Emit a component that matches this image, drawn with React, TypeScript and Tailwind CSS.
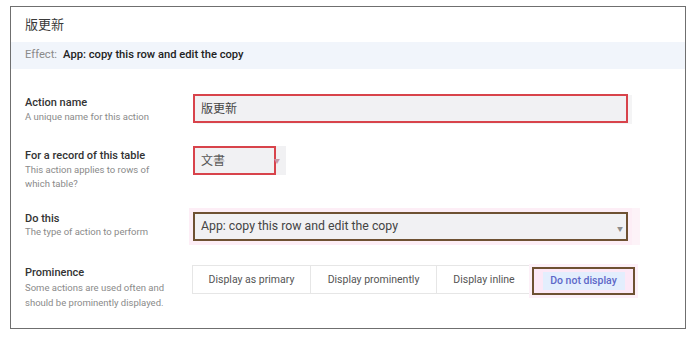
export default function App() {
  const font = { fontFamily: 'Roboto, "Noto Sans CJK TC", "Noto Sans CJK SC", sans-serif' }

  const prominence = ['Display as primary', 'Display prominently', 'Display inline']
  const widths = ['w-[119px]', 'w-[126px]', 'w-[95px]']

  return (
    <div className="w-[700px] h-[338px] bg-white pt-[6px] pl-[10px]" style={font}>
      <div className="w-[676px] h-[323px] border border-[#6f6f6f] flex flex-col">
        {/* header */}
        <div className="h-[35px] shrink-0 px-[14px] flex items-center text-[13px] text-[#3a3a3a]">
          版更新
        </div>

        {/* effect bar */}
        <div className="h-[27px] shrink-0 bg-[#f1f5fb] px-[14px] flex items-center gap-[6px] text-[11.2px]">
          <span className="text-[#8a8a8a]">Effect:</span>
          <span className="font-medium text-[#222]">App: copy this row and edit the copy</span>
        </div>

        <div className="pt-[25px] pl-[14px]">
          {/* action name */}
          <div className="flex h-[52px]">
            <div className="w-[168px] pt-[2px]">
              <div className="text-[11px] leading-[14px] font-medium text-[#333]">Action name</div>
              <div className="text-[9.5px] leading-[14px] text-[#8a8a8a]">A unique name for this action</div>
            </div>
            <div className="w-[435px] h-[29px] bg-[#f1f1f3] border-2 border-[#d8434b] flex items-center pl-[6px] text-[12px] text-[#444] shadow-[4px_1px_0_#f4f4f5]">
              版更新
            </div>
          </div>

          {/* table */}
          <div className="flex h-[66px]">
            <div className="w-[168px] pt-[3px]">
              <div className="text-[11px] leading-[14px] font-medium text-[#333]">For a record of this table</div>
              <div className="text-[9.5px] leading-[14px] text-[#8a8a8a] w-[150px]">
                This action applies to rows of which table?
              </div>
            </div>
            <div className="relative w-[93px] h-[29px] bg-[#f1f1f3] flex items-center">
              <div className="w-[83px] h-[29px] border-2 border-[#d8434b] flex items-center pl-[6px] text-[12px] text-[#555]">
                文書
              </div>
              <span className="absolute left-[81px] top-[10px] text-[6px] text-[#c99aa3]">▼</span>
            </div>
          </div>

          {/* do this */}
          <div className="flex h-[53px]">
            <div className="w-[168px]">
              <div className="text-[11px] leading-[14px] font-medium text-[#333]">Do this</div>
              <div className="text-[9.5px] leading-[12px] text-[#8a8a8a]">The type of action to perform</div>
            </div>
            <div className="relative w-[435px] h-[29px] bg-[#f1f1f3] border-2 border-[#6e5132] flex items-center pl-[6px] text-[12.3px] text-[#444] shadow-[0_0_0_4px_#fdeef6,8px_0_0_4px_#fdf3f8]">
              App: copy this row and edit the copy
              <span className="absolute right-[3px] top-[10px] text-[6px] text-[#8d8d8d]">▼</span>
            </div>
          </div>

          {/* prominence */}
          <div className="flex">
            <div className="w-[167px] pt-[1px]">
              <div className="text-[11px] leading-[14px] font-medium text-[#333]">Prominence</div>
              <div className="text-[9.5px] leading-[15px] text-[#8a8a8a] w-[150px]">
                Some actions are used often and should be prominently displayed.
              </div>
            </div>
            <div className="flex h-[29px]">
              {prominence.map((label, i) => (
                <div
                  key={label}
                  className={`${widths[i]} h-[29px] border border-[#e6e6e6] ${i > 0 ? 'border-l-0' : ''} bg-white flex items-center justify-center text-[10.5px] text-[#555]`}
                >
                  {label}
                </div>
              ))}
              <div className="w-[103px] h-[28px] mt-[2px] border-2 border-[#6e5132] bg-[#fce8f6] flex items-center justify-center shadow-[0_0_0_3px_#fdf0f8]">
                <div className="w-[82px] h-[18px] bg-[#e3eefd] flex items-center justify-center text-[10.5px] font-medium text-[#5d68c8]">
                  Do not display
                </div>
              </div>
            </div>
          </div>
        </div>
      </div>
    </div>
  )
}
